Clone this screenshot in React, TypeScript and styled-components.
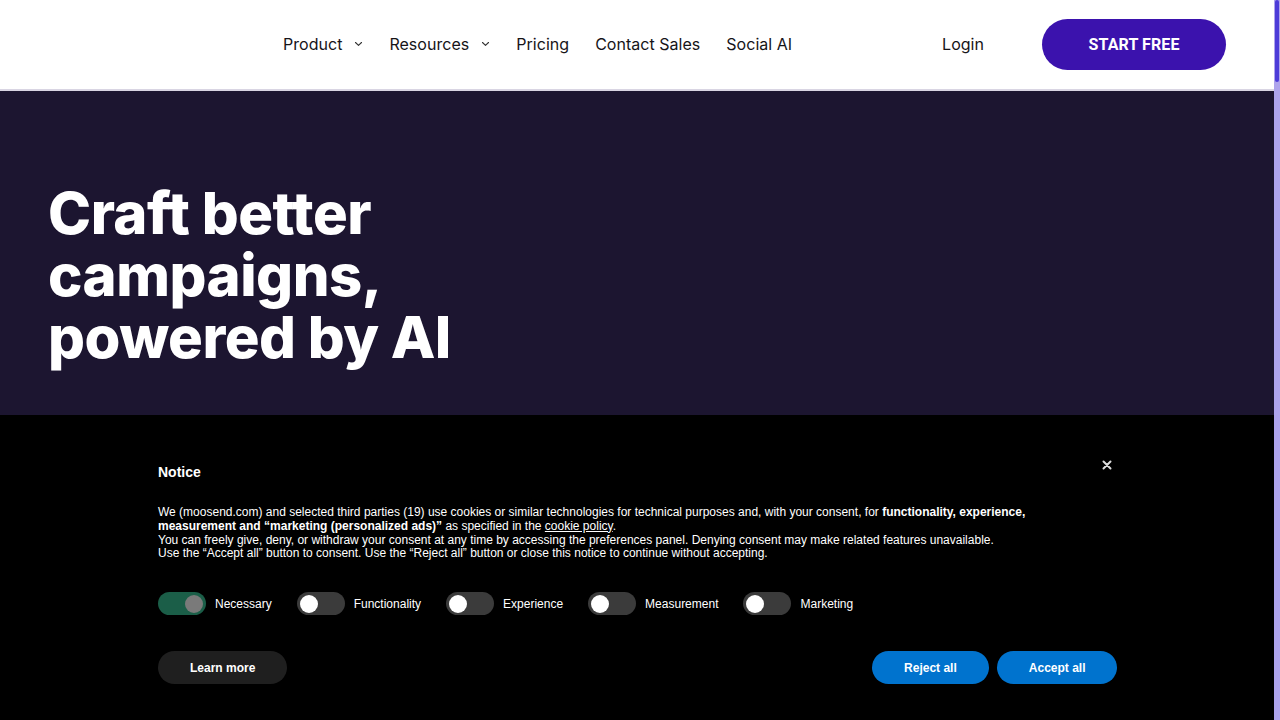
import React from 'react';
import styled, { createGlobalStyle } from 'styled-components';

const GlobalStyle = createGlobalStyle`
  html, body {
    margin: 0;
    padding: 0;
    height: 100%;
    overflow: hidden;
  }
  body {
    font-family: Inter, "Liberation Sans", Arial, sans-serif;
    background: #1c1530;
  }
  * {
    box-sizing: border-box;
  }
`;

const Page = styled.div`
  margin-right: 6px;
  min-height: 100vh;
  background: #1c1530;
`;

const Header = styled.header`
  height: 91px;
  display: flex;
  align-items: center;
  padding: 0 48px;
  background: #fff;
  border-bottom: 2px solid #d9d5e3;
`;

const BrandSlot = styled.a`
  display: block;
  width: 187px;
  height: 40px;
`;

const Nav = styled.nav`
  display: flex;
  align-items: center;
  gap: 26px;
  margin-left: 48px;
  padding-bottom: 1px;
`;

const NavItem = styled.a`
  display: flex;
  align-items: center;
  gap: 12px;
  font-size: 16px;
  letter-spacing: 0.03px;
  color: #161418;
  text-decoration: none;
  cursor: pointer;
`;

const RightGroup = styled.div`
  margin-left: auto;
  display: flex;
  align-items: center;
  gap: 58px;
`;

const LoginLink = styled(NavItem)`
  padding-bottom: 1px;
`;

const StartButton = styled.button`
  width: 184px;
  height: 51px;
  border: none;
  border-radius: 26px;
  background: #3b12ad;
  color: #fff;
  font-family: Roboto, "Liberation Sans", sans-serif;
  font-weight: 700;
  font-size: 16px;
  letter-spacing: 0.1px;
  cursor: pointer;
`;

const Hero = styled.section`
  padding: 91px 48px 0;
  height: 629px;
`;

const HeroTitle = styled.h1`
  margin: 0;
  font-family: Inter, "Liberation Sans", Arial, sans-serif;
  font-weight: 800;
  font-size: 58px;
  line-height: 62px;
  letter-spacing: -0.5px;
  color: #fff;
`;

const Scrollbar = styled.div`
  position: fixed;
  top: 0;
  right: 0;
  width: 6px;
  height: 100vh;
  background: #aea4ec;
  z-index: 20;
`;

const ScrollThumb = styled.div`
  margin-left: 1px;
  width: 4px;
  height: 82px;
  border-radius: 2px;
  background: #4c3cd8;
`;

const Banner = styled.div`
  position: fixed;
  left: 0;
  right: 6px;
  bottom: 0;
  height: 305px;
  background: #000;
  z-index: 10;
  font-family: "Liberation Sans", Arial, sans-serif;
  color: #fff;
`;

const BannerInner = styled.div`
  position: relative;
  max-width: 960px;
  margin: 0 auto;
  padding: 48px 0 0 1px;
`;

const CloseButton = styled.button`
  position: absolute;
  top: 43px;
  right: 3px;
  width: 14px;
  height: 14px;
  padding: 0;
  border: none;
  background: transparent;
  display: flex;
  align-items: center;
  justify-content: center;
  cursor: pointer;
`;

const NoticeTitle = styled.h2`
  margin: 0;
  font-size: 14px;
  line-height: 18px;
  font-weight: 700;
`;

const NoticeText = styled.div`
  margin-top: 25px;
  font-size: 12px;
  line-height: 13.8px;
  max-width: 880px;

  b {
    font-weight: 700;
  }

  a {
    color: #fff;
    text-decoration: underline;
  }

  p {
    margin: 0;
  }
`;

const ToggleRow = styled.div`
  display: flex;
  align-items: center;
  margin-top: 31px;
  gap: 25px;
`;

const ToggleField = styled.label`
  display: flex;
  align-items: center;
  gap: 9px;
  font-size: 12px;
  cursor: pointer;
`;

const Track = styled.span<{ $on: boolean }>`
  display: flex;
  align-items: center;
  justify-content: ${(p) => (p.$on ? 'flex-end' : 'flex-start')};
  width: 48px;
  height: 23px;
  padding: 0 3px;
  border-radius: 12px;
  background: ${(p) => (p.$on ? '#1b5e48' : '#3b3b3b')};
`;

const Knob = styled.span<{ $on: boolean }>`
  width: 18px;
  height: 18px;
  border-radius: 50%;
  background: ${(p) => (p.$on ? '#7a7a7a' : '#fff')};
`;

const ActionRow = styled.div`
  display: flex;
  align-items: center;
  margin-top: 36px;
`;

const PillButton = styled.button<{ $primary?: boolean; $pad?: number }>`
  height: 33px;
  padding: 0 ${(p) => p.$pad ?? 32}px;
  border: none;
  border-radius: 17px;
  background: ${(p) => (p.$primary ? '#0073ce' : '#1f1f1f')};
  color: #fff;
  font-family: "Liberation Sans", Arial, sans-serif;
  font-weight: 700;
  font-size: 12px;
  cursor: pointer;
`;

const ButtonGroup = styled.div`
  margin-left: auto;
  display: flex;
  gap: 8px;
`;

const Chevron = () => (
  <svg width="9" height="6" viewBox="0 0 9 6" fill="none">
    <path d="M1.5 1.5 4.5 4.4 7.5 1.5" stroke="#333" strokeWidth="1.1" strokeLinecap="round" strokeLinejoin="round" />
  </svg>
);

const CloseIcon = () => (
  <svg width="10" height="10" viewBox="0 0 10 10" fill="none">
    <path d="M1.5 1.5 8.5 8.5M8.5 1.5 1.5 8.5" stroke="#ddd" strokeWidth="2" strokeLinecap="round" />
  </svg>
);

const consentToggles = [
  { label: 'Necessary', on: true },
  { label: 'Functionality', on: false },
  { label: 'Experience', on: false },
  { label: 'Measurement', on: false },
  { label: 'Marketing', on: false },
];

export default function App() {
  return (
    <>
      <GlobalStyle />
      <Page>
        <Header>
          <BrandSlot aria-label="Moosend" />
          <Nav>
            <NavItem>
              Product <Chevron />
            </NavItem>
            <NavItem>
              Resources <Chevron />
            </NavItem>
            <NavItem>Pricing</NavItem>
            <NavItem>Contact Sales</NavItem>
            <NavItem>Social AI</NavItem>
          </Nav>
          <RightGroup>
            <LoginLink>Login</LoginLink>
            <StartButton>START FREE</StartButton>
          </RightGroup>
        </Header>
        <Hero>
          <HeroTitle>
            Craft better
            <br />
            campaigns,
            <br />
            powered by AI
          </HeroTitle>
        </Hero>
      </Page>

      <Banner role="dialog" aria-label="Notice">
        <BannerInner>
          <CloseButton aria-label="Close">
            <CloseIcon />
          </CloseButton>
          <NoticeTitle>Notice</NoticeTitle>
          <NoticeText>
            <p>
              We (moosend.com) and selected third parties (19) use cookies or similar technologies for technical
              purposes and, with your consent, for <b>functionality, experience,</b>
              <br />
              <b>measurement and “marketing (personalized ads)”</b> as specified in the{' '}
              <a href="#">cookie policy</a>.
            </p>
            <p>
              You can freely give, deny, or withdraw your consent at any time by accessing the preferences panel.
              Denying consent may make related features unavailable.
            </p>
            <p>Use the “Accept all” button to consent. Use the “Reject all” button or close this notice to continue without accepting.</p>
          </NoticeText>
          <ToggleRow>
            {consentToggles.map((t) => (
              <ToggleField key={t.label}>
                <Track $on={t.on}>
                  <Knob $on={t.on} />
                </Track>
                {t.label}
              </ToggleField>
            ))}
          </ToggleRow>
          <ActionRow>
            <PillButton>Learn more</PillButton>
            <ButtonGroup>
              <PillButton $primary $pad={32.5}>Reject all</PillButton>
              <PillButton $primary $pad={31.5}>Accept all</PillButton>
            </ButtonGroup>
          </ActionRow>
        </BannerInner>
      </Banner>

      <Scrollbar>
        <ScrollThumb />
      </Scrollbar>
    </>
  );
}
